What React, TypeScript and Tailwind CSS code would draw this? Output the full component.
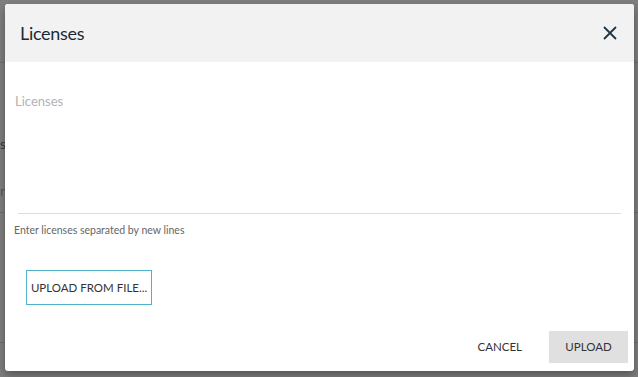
import React from "react";

export default function App() {
  return (
    <div
      className="relative w-[638px] h-[377px] overflow-hidden bg-[#7f7f7f]"
      style={{ fontFamily: "Lato, 'Open Sans', sans-serif" }}
    >
      {/* faint background page */}
      <div className="absolute left-0 top-[62px] w-[638px] h-px bg-[#6e6e6e]" />
      <div className="absolute left-0 top-[137px] text-[14px] text-[#3a3a3a] leading-none">s</div>
      <div className="absolute left-0 top-[184px] text-[14px] text-[#5a5a5a] leading-none">n</div>
      <div className="absolute left-0 top-[212px] w-[638px] h-px bg-[#6e6e6e]" />
      <div className="absolute left-0 top-[342px] w-[638px] h-px bg-[#6e6e6e]" />

      <div className="absolute left-[5px] top-[4px] w-[629px] h-[367px] rounded-[3px] bg-white shadow-[0_4px_10px_rgba(0,0,0,0.35)] flex flex-col overflow-hidden">
        <div className="h-[58px] shrink-0 bg-[#f2f2f2] flex items-center justify-between pl-[15px] pr-[15px]">
          <div className="text-[18px] text-[#1e2a33] tracking-[-0.3px]">Licenses</div>
          <svg width="14" height="14" viewBox="0 0 14 14" className="mr-[2px]">
            <path d="M1 1 L13 13 M13 1 L1 13" stroke="#1e3545" strokeWidth="1.8" fill="none" />
          </svg>
        </div>

        <div className="flex flex-col px-[13px]">
          <div className="pt-[30px] text-[13px] text-[#b3b3b3] h-[152px] border-b border-[#dcdcdc]">
            <span className="-ml-[3px]">Licenses</span>
          </div>
          <div className="mt-[9px] text-[10.5px] text-[#666] -ml-[4px]">Enter licenses separated by new lines</div>
          <div className="mt-[31px] pl-[8px]">
            <div className="h-[35px] w-[126px] border border-solid border-[#4fb4cb] text-[11.5px] text-[#333] flex items-center justify-center">
              UPLOAD FROM FILE...
            </div>
          </div>
        </div>

        <div className="mt-auto mb-[8px] mr-[6px] flex items-center justify-end gap-[27px]">
          <span className="text-[11.5px] text-[#333]">CANCEL</span>
          <div className="h-[32px] w-[79px] bg-[#e0e0e0] flex items-center justify-center text-[11.5px] text-[#333]">
            UPLOAD
          </div>
        </div>
      </div>
    </div>
  );
}
